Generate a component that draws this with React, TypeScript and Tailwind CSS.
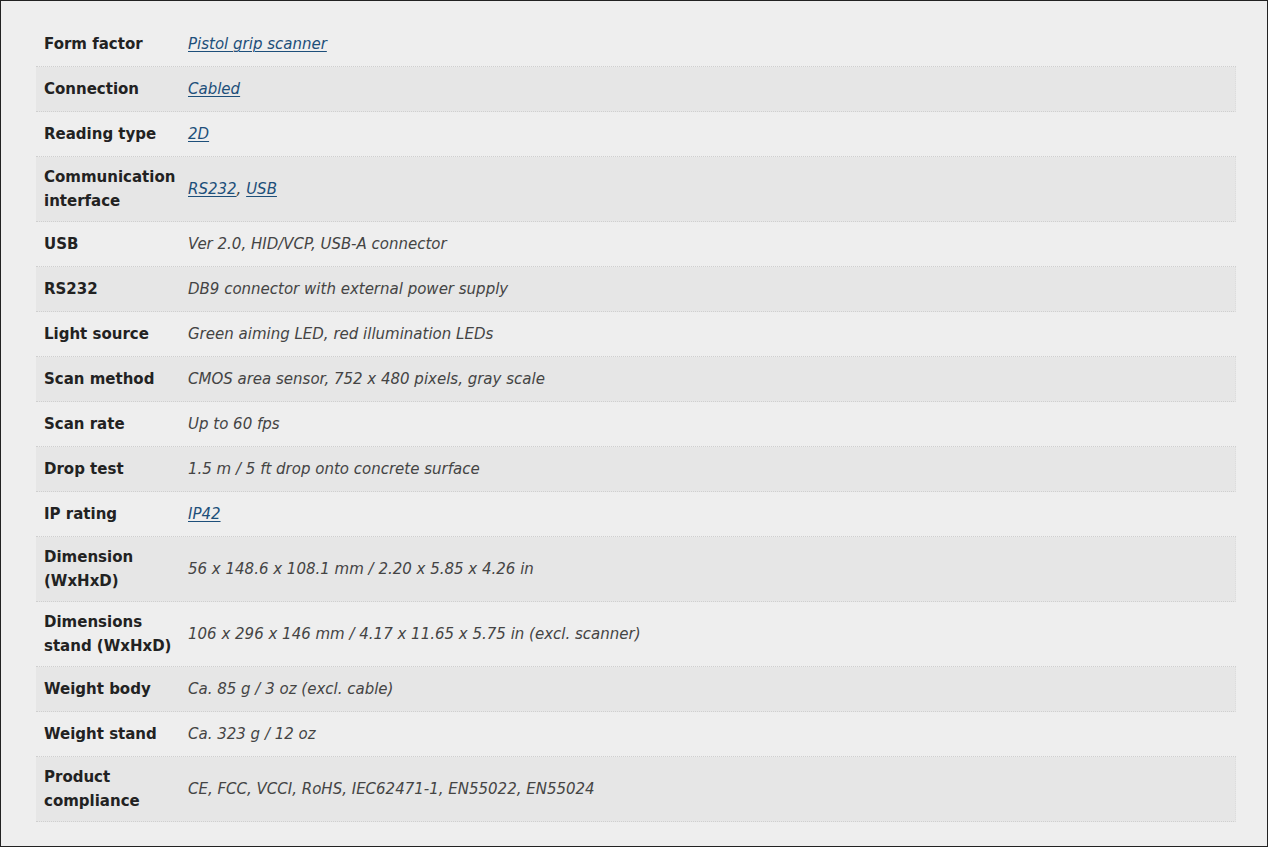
import React from "react";

type Row = { label: React.ReactNode; value: React.ReactNode; tall?: boolean };

const L = ({ children }: { children: React.ReactNode }) => (
  <a href="#" className="text-[#1d4f7a] underline underline-offset-2 decoration-1">
    {children}
  </a>
);

const rows: Row[] = [
  { label: "Form factor", value: <L>Pistol grip scanner</L> },
  { label: "Connection", value: <L>Cabled</L> },
  { label: "Reading type", value: <L>2D</L> },
  {
    label: "Communication interface",
    value: (
      <>
        <L>RS232</L>, <L>USB</L>
      </>
    ),
    tall: true,
  },
  { label: "USB", value: "Ver 2.0, HID/VCP, USB-A connector" },
  { label: "RS232", value: "DB9 connector with external power supply" },
  { label: "Light source", value: "Green aiming LED, red illumination LEDs" },
  { label: "Scan method", value: "CMOS area sensor, 752 x 480 pixels, gray scale" },
  { label: "Scan rate", value: "Up to 60 fps" },
  { label: "Drop test", value: "1.5 m / 5 ft drop onto concrete surface" },
  { label: "IP rating", value: <L>IP42</L> },
  { label: "Dimension (WxHxD)", value: "56 x 148.6 x 108.1 mm / 2.20 x 5.85 x 4.26 in", tall: true },
  {
    label: "Dimensions stand (WxHxD)",
    value: "106 x 296 x 146 mm / 4.17 x 11.65 x 5.75 in (excl. scanner)",
    tall: true,
  },
  { label: "Weight body", value: "Ca. 85 g / 3 oz (excl. cable)" },
  { label: "Weight stand", value: "Ca. 323 g / 12 oz" },
  {
    label: "Product compliance",
    value: "CE, FCC, VCCI, RoHS, IEC62471-1, EN55022, EN55024",
    tall: true,
  },
];

export default function App() {
  return (
    <div
      className="w-[1268px] h-[847px] bg-[#eeeeee] border border-[#222] pt-[21px] pl-[35px]"
      style={{ fontFamily: '"DejaVu Sans", sans-serif' }}
    >
      <div className="w-[1200px] flex flex-col">
        {rows.map((r, i) => (
          <div
            key={i}
            className={`flex border-b border-dotted border-[#cfcfcf] ${
              r.tall ? "h-[65px]" : "h-[45px]"
            } ${i % 2 === 1 ? "bg-[#e6e6e6] border-r border-r-[#dcdcdc]" : ""}`}
          >
            <div className="w-[148px] shrink-0 pl-[8px] pr-[4px] flex items-center text-[15px] leading-[24px] font-bold text-[#222]">
              <span>{r.label}</span>
            </div>
            <div className="flex-1 pl-[4px] flex items-center text-[15px] leading-[24px] italic text-[#444]">
              <span>{r.value}</span>
            </div>
          </div>
        ))}
      </div>
    </div>
  );
}
